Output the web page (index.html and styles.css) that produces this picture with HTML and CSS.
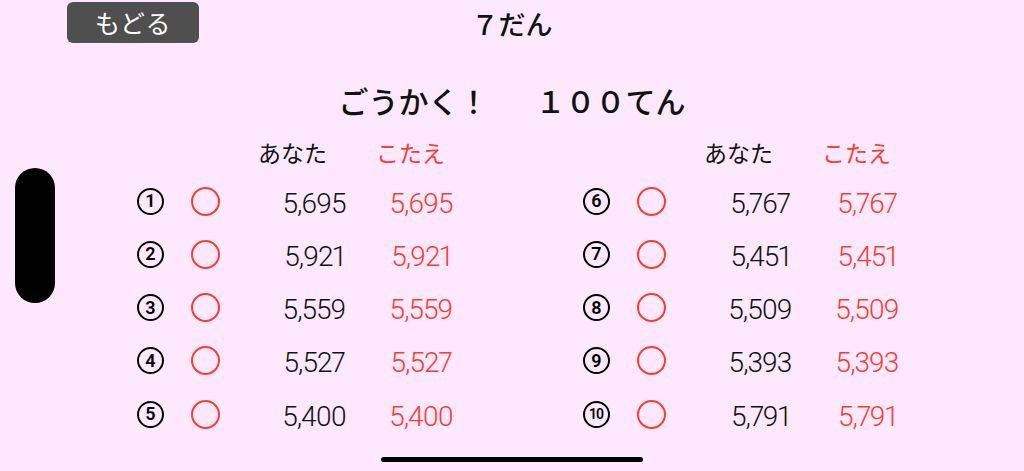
FILE: index.html
```html
<!DOCTYPE html>
<html lang="ja">
<head>
<meta charset="utf-8">
<title>7だん</title>
<link rel="stylesheet" href="styles.css">
</head>
<body>
<div class="screen">
  <header class="topbar">
    <button class="back">もどる</button>
    <div class="title">７だん</div>
    <div></div>
  </header>

  <div class="score"><span>ごうかく！</span><span class="points">１００てん</span></div>

  <div class="tables">
    <section class="table">
      <div class="thead"><span class="h-you">あなた</span><span class="h-ans">こたえ</span></div>
      <div class="rows">
        <div class="row"><span class="num">1</span><span class="mark"></span><span class="yours">5,695</span><span class="answer">5,695</span></div>
        <div class="row"><span class="num">2</span><span class="mark"></span><span class="yours">5,921</span><span class="answer">5,921</span></div>
        <div class="row"><span class="num">3</span><span class="mark"></span><span class="yours">5,559</span><span class="answer">5,559</span></div>
        <div class="row"><span class="num">4</span><span class="mark"></span><span class="yours">5,527</span><span class="answer">5,527</span></div>
        <div class="row"><span class="num">5</span><span class="mark"></span><span class="yours">5,400</span><span class="answer">5,400</span></div>
      </div>
    </section>
    <section class="table">
      <div class="thead"><span class="h-you">あなた</span><span class="h-ans">こたえ</span></div>
      <div class="rows">
        <div class="row"><span class="num">6</span><span class="mark"></span><span class="yours">5,767</span><span class="answer">5,767</span></div>
        <div class="row"><span class="num">7</span><span class="mark"></span><span class="yours">5,451</span><span class="answer">5,451</span></div>
        <div class="row"><span class="num">8</span><span class="mark"></span><span class="yours">5,509</span><span class="answer">5,509</span></div>
        <div class="row"><span class="num">9</span><span class="mark"></span><span class="yours">5,393</span><span class="answer">5,393</span></div>
        <div class="row"><span class="num num-small">10</span><span class="mark"></span><span class="yours">5,791</span><span class="answer">5,791</span></div>
      </div>
    </section>
  </div>

  <div class="side-pill"></div>
  <div class="home-bar"></div>
</div>
</body>
</html>
```

FILE: styles.css
```css
html, body {
  margin: 0;
  padding: 0;
}
body {
  background: #fde8fd;
  font-family: "Noto Sans CJK JP", "Noto Sans", sans-serif;
  color: #111;
}
.screen {
  position: relative;
  width: 1024px;
  height: 471px;
  overflow: hidden;
}
.topbar {
  display: grid;
  grid-template-columns: 1fr auto 1fr;
  align-items: center;
  padding-top: 2px;
  height: 41px;
}
.back {
  justify-self: start;
  margin-left: 67px;
  width: 132px;
  height: 41px;
  border: none;
  border-radius: 6px;
  background: #4f4f4f;
  color: #fff;
  font-family: "Noto Sans CJK JP", sans-serif;
  font-size: 25px;
  letter-spacing: 0.5px;
  line-height: 41px;
  padding: 0;
}
.title {
  font-size: 27px;
  font-weight: 500;
  line-height: 36px;
  padding-top: 3px;
  color: #111;
}
.score {
  margin-top: 39px;
  text-align: center;
  font-size: 30px;
  font-weight: 500;
  line-height: 36px;
  color: #111;
  white-space: nowrap;
}
.points {
  margin-left: 47px;
}
.tables {
  display: flex;
  gap: 122px;
  padding-left: 137px;
  margin-top: 19px;
}
.table {
  width: 324px;
  flex-shrink: 0;
}
.thead {
  display: flex;
  align-items: center;
  height: 30px;
  padding-left: 121px;
  font-size: 23px;
  white-space: nowrap;
}
.h-you {
  flex-shrink: 0;
  width: 70px;
  color: #111;
}
.h-ans {
  flex-shrink: 0;
  margin-left: 48px;
  color: #ff3b30;
}
.rows {
  margin-top: 7.5px;
}
.row {
  display: flex;
  align-items: center;
  height: 53.25px;
}
.num {
  flex-shrink: 0;
  box-sizing: border-box;
  width: 27px;
  height: 27px;
  border: 2.5px solid #000;
  border-radius: 50%;
  display: flex;
  align-items: center;
  justify-content: center;
  font-family: Roboto, sans-serif;
  font-weight: 600;
  font-size: 18px;
  line-height: 1;
  color: #000;
}
.num-small {
  font-size: 14px;
  letter-spacing: -1px;
  padding-right: 1px;
}
.mark {
  flex-shrink: 0;
  box-sizing: border-box;
  width: 29px;
  height: 29px;
  margin-left: 27px;
  border: 2.5px solid #ff3b30;
  border-radius: 50%;
}
.yours, .answer {
  flex-shrink: 0;
  width: 80px;
  text-align: center;
  font-family: Roboto, sans-serif;
  font-weight: 300;
  font-size: 28px;
  letter-spacing: -1px;
  font-variant-numeric: proportional-nums;
  padding-top: 4px;
}
.yours {
  margin-left: 54px;
  color: #111;
}
.answer {
  margin-left: 27px;
  color: #ff3b30;
}
.side-pill {
  position: absolute;
  left: 15px;
  top: 168px;
  width: 40px;
  height: 135px;
  border-radius: 20px;
  background: #000;
}
.home-bar {
  position: absolute;
  left: 381px;
  top: 457px;
  width: 262px;
  height: 5px;
  border-radius: 3px;
  background: #000;
}
```
